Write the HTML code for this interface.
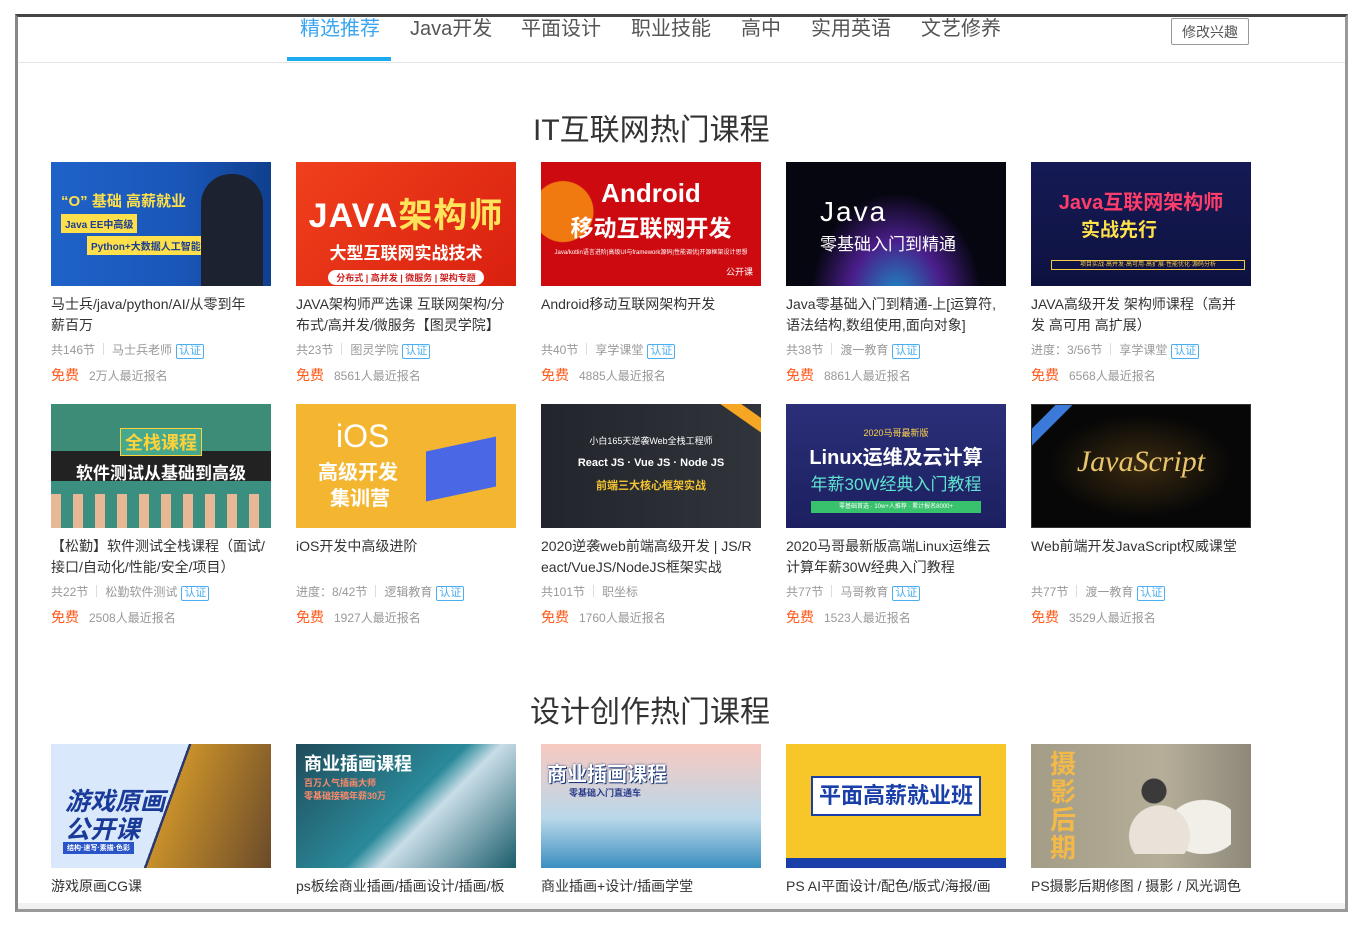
<!DOCTYPE html>
<html><head><meta charset="utf-8">
<style>
*{margin:0;padding:0;box-sizing:border-box}
body{width:1362px;height:927px;background:#fff;font-family:"Liberation Sans","Noto Sans CJK SC",sans-serif;position:relative;overflow:hidden}
.frame{position:absolute;left:15px;top:14px;width:1333px;height:898px;border:2px solid #555;border-top:3px solid #444;border-right:3px solid #999;border-bottom:3px solid #999;border-left:3px solid #888;background:#fff;overflow:hidden}
.nav{position:absolute;left:0;right:0;top:0;height:46px;border-bottom:1px solid #e4e4e4}
.nav a{position:absolute;top:-5px;font-size:20px;color:#555;text-decoration:none;white-space:nowrap}
.nav a.on{color:#3aa5f0}
.ul{position:absolute;left:269px;top:40px;width:104px;height:4px;background:#1eaaf1}
.btn{position:absolute;left:1153px;top:1px;width:78px;height:27px;border:1px solid #999;border-radius:2px;font-size:14px;color:#555;text-align:center;line-height:26px}
h2{position:absolute;font-weight:normal;font-size:30px;color:#333;white-space:nowrap}
.card{position:absolute;width:220px}
.img{width:220px;height:124px;position:relative;overflow:hidden;color:#fff;font-weight:bold;text-align:center}
.t{font-size:14px;color:#333;line-height:21px;margin-top:8px;height:42px;width:220px;overflow:hidden}
.m{font-size:12px;color:#999;margin-top:5px;height:18px;white-space:nowrap}
.m i{display:inline-block;width:1px;height:12px;background:#ddd;margin:0 8px;vertical-align:-1px}
.m b{font-weight:normal;display:inline-block;border:1px solid #4aaef0;color:#4aaef0;font-size:11px;line-height:13px;padding:0 2px;margin-left:4px;border-radius:2px}
.p{font-size:12px;color:#999;margin-top:6px}
.p span{color:#ff5a1a;font-size:14px;margin-right:10px}
.bottom{position:absolute;left:0;right:0;bottom:0;height:6px;background:#f1f1f1}
</style></head><body>
<div class="frame">
<div class="nav">
<a class="on" style="left:282px">精选推荐</a>
<a style="left:392px">Java开发</a>
<a style="left:503px">平面设计</a>
<a style="left:613px">职业技能</a>
<a style="left:723px">高中</a>
<a style="left:793px">实用英语</a>
<a style="left:903px">文艺修养</a>
<div class="ul"></div>
<div class="btn">修改兴趣</div>
</div>
<h2 style="left:515px;top:88px">IT互联网热门课程</h2>
<h2 style="left:512px;top:670px">设计创作热门课程</h2>

<!-- row1 -->
<div class="card" style="left:33px;top:145px">
<div class="img" style="background:linear-gradient(90deg,#1e62c9 0%,#1a56b8 60%,#0f3f8e 100%)"><div style="position:absolute;left:10px;top:28px;font-size:15px;color:#ffe04a">“O” 基础 高薪就业</div><div style="position:absolute;left:10px;top:52px;background:#ffe04a;color:#1a3f90;font-size:10px;padding:2px 4px">Java EE中高级</div><div style="position:absolute;left:36px;top:74px;background:#ffe04a;color:#1a3f90;font-size:10px;padding:2px 4px">Python+大数据人工智能</div><div style="position:absolute;right:8px;top:12px;width:62px;height:112px;background:#1c2230;border-radius:30px 30px 0 0"></div></div>
<div class="t">马士兵/java/python/AI/从零到年<br>薪百万</div>
<div class="m">共146节<i></i>马士兵老师<b>认证</b></div>
<div class="p"><span>免费</span>2万人最近报名</div></div>

<div class="card" style="left:278px;top:145px">
<div class="img" style="background:linear-gradient(135deg,#f0401c,#d9200f)"><div style="margin-top:26px;font-size:34px;color:#fff;letter-spacing:1px">JAVA<span style="color:#ffe35a">架构师</span></div><div style="font-size:17px;margin-top:2px">大型互联网实战技术</div><div style="display:inline-block;margin-top:6px;background:#fff;color:#c22;font-size:9px;padding:1px 8px;border-radius:8px">分布式 | 高并发 | 微服务 | 架构专题</div></div>
<div class="t">JAVA架构师严选课 互联网架构/分布式/高并发/微服务【图灵学院】</div>
<div class="m">共23节<i></i>图灵学院<b>认证</b></div>
<div class="p"><span>免费</span>8561人最近报名</div></div>

<div class="card" style="left:523px;top:145px">
<div class="img" style="background:radial-gradient(circle at 10% 40%,#f07a10 0 30px,transparent 31px),#cd0a10"><div style="margin-top:16px;font-size:26px">Android</div><div style="font-size:23px">移动互联网开发</div><div style="font-size:6px;font-weight:normal;margin-top:4px">Java/kotlin语言进阶|高级UI与framework源码|性能调优|开源框架设计思想</div><div style="position:absolute;right:8px;bottom:8px;font-size:9px;font-weight:normal">公开课</div></div>
<div class="t">Android移动互联网架构开发</div>
<div class="m">共40节<i></i>享学课堂<b>认证</b></div>
<div class="p"><span>免费</span>4885人最近报名</div></div>

<div class="card" style="left:768px;top:145px">
<div class="img" style="background:radial-gradient(ellipse at 50% 110%,#1a8fc8 0,#4a1e8a 30%,transparent 55%),#05060f;text-align:left"><div style="position:absolute;left:34px;top:34px;font-size:28px;font-weight:normal;letter-spacing:2px">Java</div><div style="position:absolute;left:34px;top:68px;font-size:17px;font-weight:normal">零基础入门到精通</div></div>
<div class="t">Java零基础入门到精通-上[运算符,语法结构,数组使用,面向对象]</div>
<div class="m">共38节<i></i>渡一教育<b>认证</b></div>
<div class="p"><span>免费</span>8861人最近报名</div></div>

<div class="card" style="left:1013px;top:145px">
<div class="img" style="background:linear-gradient(180deg,#151a55,#0e1240)"><div style="margin-top:24px;font-size:20px;color:#ff3d6a">Java互联网架构师</div><div style="font-size:19px;color:#ffe14a;text-align:left;padding-left:50px">实战先行</div><div style="position:absolute;left:20px;bottom:16px;right:6px;height:10px;border:1px solid #f7c94a;font-size:6px;color:#f7c94a;font-weight:normal;line-height:8px">项目实战·高并发·高可用·高扩展·性能优化·源码分析</div></div>
<div class="t">JAVA高级开发 架构师课程（高并<br>发 高可用 高扩展）</div>
<div class="m">进度：3/56节<i></i>享学课堂<b>认证</b></div>
<div class="p"><span>免费</span>6568人最近报名</div></div>

<!-- row2 -->
<div class="card" style="left:33px;top:387px">
<div class="img" style="background:linear-gradient(180deg,#3c8c78 0 38%,#222 38% 62%,#3a8f80 62%)"><div style="margin-top:24px;display:inline-block;background:#46a98e;border:1px solid #ffd23a;color:#ffd23a;font-size:18px;padding:0 4px">全栈课程</div><div style="font-size:17px;margin-top:3px">软件测试从基础到高级</div><div style="position:absolute;left:0;right:0;bottom:0;height:34px;background:repeating-linear-gradient(90deg,#e8b896 0 10px,#3a8f80 10px 22px)"></div></div>
<div class="t">【松勤】软件测试全栈课程（面试/<br>接口/自动化/性能/安全/项目）</div>
<div class="m">共22节<i></i>松勤软件测试<b>认证</b></div>
<div class="p"><span>免费</span>2508人最近报名</div></div>

<div class="card" style="left:278px;top:387px">
<div class="img" style="background:#f4b631;text-align:left"><div style="position:absolute;left:40px;top:14px;font-size:32px;font-weight:normal">iOS</div><div style="position:absolute;left:22px;top:52px;font-size:20px">高级开发</div><div style="position:absolute;left:34px;top:78px;font-size:20px">集训营</div><div style="position:absolute;right:20px;top:40px;width:70px;height:50px;background:#4a67e6;transform:skewY(-12deg)"></div></div>
<div class="t">iOS开发中高级进阶</div>
<div class="m">进度：8/42节<i></i>逻辑教育<b>认证</b></div>
<div class="p"><span>免费</span>1927人最近报名</div></div>

<div class="card" style="left:523px;top:387px">
<div class="img" style="background:linear-gradient(90deg,#22252b,#30343b)"><div style="font-size:9px;font-weight:normal;margin-top:30px">小白165天逆袭Web全栈工程师</div><div style="font-size:11px;margin-top:10px">React JS · Vue JS · Node JS</div><div style="font-size:11px;color:#f5c531;margin-top:8px">前端三大核心框架实战</div><div style="position:absolute;right:-14px;top:4px;width:60px;height:12px;background:#f5a623;transform:rotate(35deg)"></div></div>
<div class="t">2020逆袭web前端高级开发 | JS/R<br>eact/VueJS/NodeJS框架实战</div>
<div class="m">共101节<i></i>职坐标</div>
<div class="p"><span>免费</span>1760人最近报名</div></div>

<div class="card" style="left:768px;top:387px">
<div class="img" style="background:linear-gradient(180deg,#2a2f78,#1c2060)"><div style="font-size:9px;color:#ffd34a;font-weight:normal;margin-top:22px">2020马哥最新版</div><div style="font-size:20px;margin-top:2px">Linux运维及云计算</div><div style="font-size:17px;color:#60e2d0;font-weight:normal">年薪30W经典入门教程</div><div style="margin:6px auto 0;width:170px;height:12px;background:#38c26e;font-size:6px;line-height:12px;font-weight:normal">零基础首选 · 10w+人推荐 · 累计报名8000+</div></div>
<div class="t">2020马哥最新版高端Linux运维云<br>计算年薪30W经典入门教程</div>
<div class="m">共77节<i></i>马哥教育<b>认证</b></div>
<div class="p"><span>免费</span>1523人最近报名</div></div>

<div class="card" style="left:1013px;top:387px">
<div class="img" style="background:radial-gradient(ellipse at 50% 50%,#3a2a10,#070707 60%);border:1px solid #333"><div style="margin-top:40px;font-size:30px;font-family:'Liberation Serif',serif;font-style:italic;font-weight:normal;color:#e8c46a">JavaScript</div><div style="position:absolute;left:-14px;top:10px;width:60px;height:12px;background:#3b7ad8;transform:rotate(-45deg)"></div></div>
<div class="t">Web前端开发JavaScript权威课堂</div>
<div class="m">共77节<i></i>渡一教育<b>认证</b></div>
<div class="p"><span>免费</span>3529人最近报名</div></div>

<!-- row3 -->
<div class="card" style="left:33px;top:727px">
<div class="img" style="background:linear-gradient(110deg,#d9e9fb 0 52%,#2a3a70 52% 53%,#c8902a 53%,#6a4a2a);text-align:left"><div style="position:absolute;left:14px;top:38px;font-size:25px;color:#1a3a9a;font-style:italic">游戏原画</div><div style="position:absolute;left:14px;top:66px;font-size:25px;color:#1a3a9a;font-style:italic">公开课</div><div style="position:absolute;left:12px;top:98px;background:#2a55c8;font-size:7px;padding:1px 4px">结构·速写·素描·色彩</div></div>
<div class="t">游戏原画CG课</div></div>

<div class="card" style="left:278px;top:727px">
<div class="img" style="background:linear-gradient(135deg,#1f4b5a,#2a8a9a 50%,#c8dde8 60%,#1b5d6a);text-align:left"><div style="position:absolute;left:8px;top:6px;font-size:18px">商业插画课程</div><div style="position:absolute;left:8px;top:32px;font-size:9px;color:#ff8a6a">百万人气插画大师<br>零基础接稿年薪30万</div></div>
<div class="t">ps板绘商业插画/插画设计/插画/板</div></div>

<div class="card" style="left:523px;top:727px">
<div class="img" style="background:linear-gradient(180deg,#f8c9c0,#b9d8ea 60%,#3b8fc0);text-align:left"><div style="position:absolute;left:6px;top:14px;font-size:20px;color:#fff;text-shadow:0 0 2px #1a3a7a,1px 1px 0 #1a3a7a">商业插画课程</div><div style="position:absolute;left:28px;top:42px;font-size:9px;color:#2a3a8a">零基础入门直通车</div></div>
<div class="t">商业插画+设计/插画学堂</div></div>

<div class="card" style="left:768px;top:727px">
<div class="img" style="background:#f7c72a"><div style="margin:32px auto 0;width:170px;height:40px;background:#fff;border:2px solid #1a3fa8;color:#1a3fa8;font-size:22px;line-height:36px">平面高薪就业班</div><div style="position:absolute;left:0;right:0;bottom:0;height:10px;background:#1a3fa8"></div></div>
<div class="t">PS AI平面设计/配色/版式/海报/画</div></div>

<div class="card" style="left:1013px;top:727px">
<div class="img" style="background:linear-gradient(90deg,#a39c86,#b5ae98 60%,#8e887a)"><div style="position:absolute;left:18px;top:6px;width:28px;font-size:26px;color:#f2b948;line-height:28px">摄影后期</div><div style="position:absolute;left:90px;top:20px;width:110px;height:90px;background:radial-gradient(circle at 30% 30%,#3a3a3a 0 12px,transparent 13px),radial-gradient(ellipse at 35% 80%,#e8e2d8 0 30px,transparent 31px),radial-gradient(ellipse at 75% 70%,#f2efe8 0 35px,transparent 36px)"></div></div>
<div class="t">PS摄影后期修图 / 摄影 / 风光调色</div></div>

<div class="bottom"></div>
</div>
</body></html>
